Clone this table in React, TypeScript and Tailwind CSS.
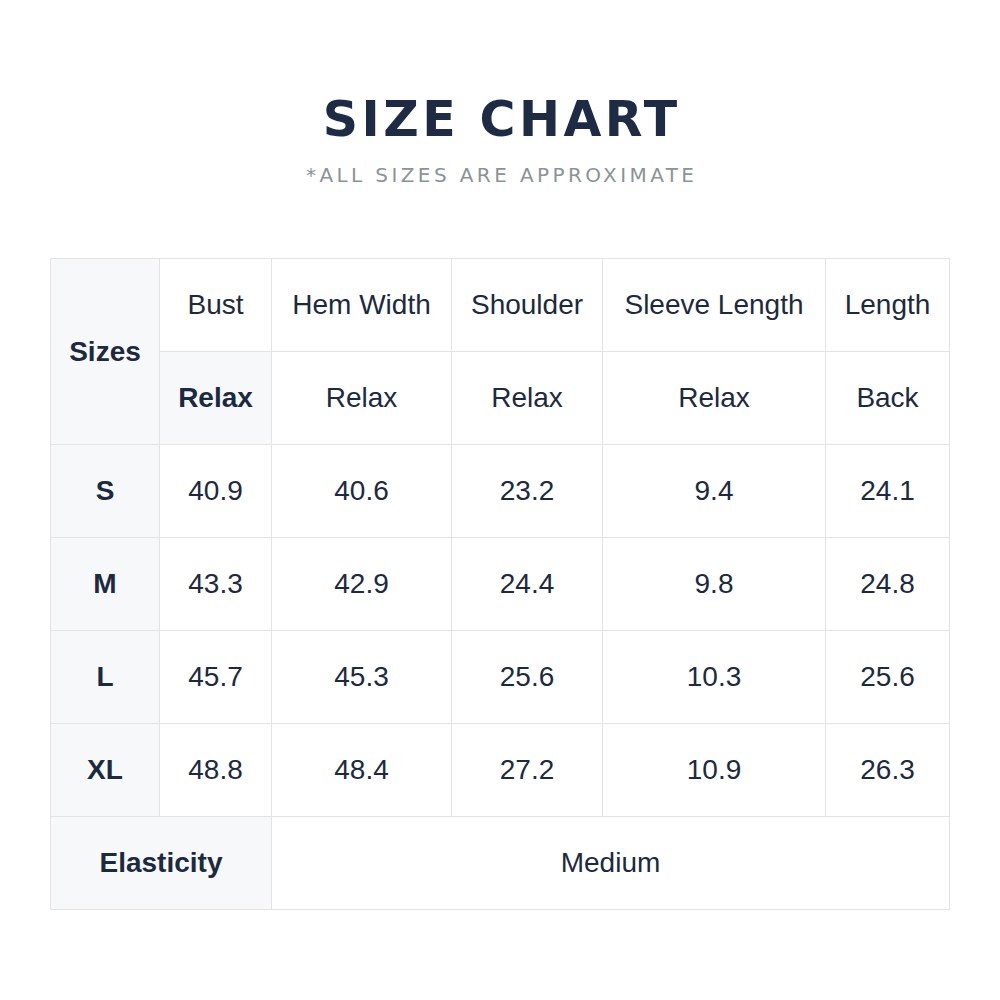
const cols = ["Bust", "Hem Width", "Shoulder", "Sleeve Length", "Length"];
const sub = ["Relax", "Relax", "Relax", "Relax", "Back"];
const rows: [string, string[]][] = [
  ["S", ["40.9", "40.6", "23.2", "9.4", "24.1"]],
  ["M", ["43.3", "42.9", "24.4", "9.8", "24.8"]],
  ["L", ["45.7", "45.3", "25.6", "10.3", "25.6"]],
  ["XL", ["48.8", "48.4", "27.2", "10.9", "26.3"]],
];

const cell = "border border-[#e3e3e3] h-[93px] p-0 text-center align-middle";
const head = "bg-[#f7f8fa] font-bold";

export default function App() {
  return (
    <div className="w-[1000px] h-[1000px] bg-white flex flex-col items-center text-[#1c2a3f] font-['Liberation_Sans',Arial,sans-serif]">
      <h1 className="mt-[92px] text-[49px] leading-[56px] font-bold tracking-[0.07em] pl-[0.07em] text-[#1d2b45] font-['DejaVu_Sans',sans-serif]">
        SIZE CHART
      </h1>
      <p className="mt-[15px] text-[20px] leading-[24px] tracking-[0.17em] pl-[0.17em] text-[#8b9396] font-['DejaVu_Sans',sans-serif]">
        *ALL SIZES ARE APPROXIMATE
      </p>
      <table className="mt-[71px] w-[900px] border-collapse table-fixed text-[28px]">
        <colgroup>
          <col className="w-[109px]" />
          <col className="w-[112px]" />
          <col className="w-[180px]" />
          <col className="w-[151px]" />
          <col className="w-[223px]" />
          <col className="w-[124px]" />
        </colgroup>
        <tbody>
          <tr>
            <td rowSpan={2} className={`${cell} ${head}`}>Sizes</td>
            {cols.map((c) => (
              <td key={c} className={cell}>{c}</td>
            ))}
          </tr>
          <tr>
            {sub.map((s, i) => (
              <td key={i} className={`${cell} ${i === 0 ? head : ""}`}>{s}</td>
            ))}
          </tr>
          {rows.map(([size, vals]) => (
            <tr key={size}>
              <td className={`${cell} ${head}`}>{size}</td>
              {vals.map((v, i) => (
                <td key={i} className={cell}>{v}</td>
              ))}
            </tr>
          ))}
          <tr>
            <td colSpan={2} className={`${cell} ${head}`}>Elasticity</td>
            <td colSpan={4} className={cell}>Medium</td>
          </tr>
        </tbody>
      </table>
    </div>
  );
}
